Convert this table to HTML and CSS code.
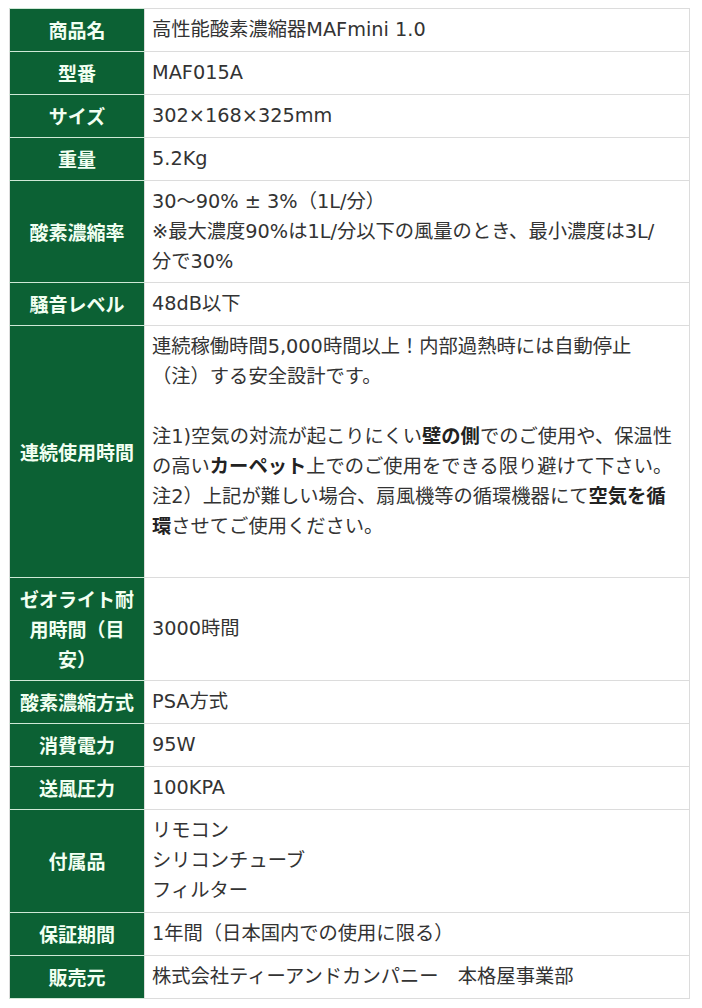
FILE: index.html
```html
<!DOCTYPE html>
<html lang="ja">
<head>
<meta charset="utf-8">
<link rel="stylesheet" href="styles.css">
</head>
<body>
<table class="spec">
<tr><th>商品名</th><td>高性能酸素濃縮器MAFmini 1.0</td></tr>
<tr><th>型番</th><td>MAF015A</td></tr>
<tr><th>サイズ</th><td>302×168×325mm</td></tr>
<tr><th>重量</th><td>5.2Kg</td></tr>
<tr><th>酸素濃縮率</th><td>30〜90% ± 3%（1L/分）<br>※最大濃度90%は1L/分以下の風量のとき、最小濃度は3L/<br>分で30%</td></tr>
<tr><th>騒音レベル</th><td>48dB以下</td></tr>
<tr><th>連続使用時間</th><td>連続稼働時間5,000時間以上！内部過熱時には自動停止<br>（注）する安全設計です。<br><br>注1)空気の対流が起こりにくい<b>壁の側</b>でのご使用や、保温性<br>の高い<b>カーペット</b>上でのご使用をできる限り避けて下さい。<br>注2）上記が難しい場合、扇風機等の循環機器にて<b>空気を循<br>環</b>させてご使用ください。<br><br></td></tr>
<tr><th>ゼオライト耐用時間（目安）</th><td>3000時間</td></tr>
<tr><th>酸素濃縮方式</th><td>PSA方式</td></tr>
<tr><th>消費電力</th><td>95W</td></tr>
<tr><th>送風圧力</th><td>100KPA</td></tr>
<tr><th>付属品</th><td>リモコン<br>シリコンチューブ<br>フィルター</td></tr>
<tr><th>保証期間</th><td>1年間（日本国内での使用に限る）</td></tr>
<tr><th>販売元</th><td>株式会社ティーアンドカンパニー　本格屋事業部</td></tr>
</table>
</body>
</html>
```
FILE: styles.css
```css
html, body {
  margin: 0;
  padding: 0;
  background: #ffffff;
}
body {
  padding: 8px 0 0 9px;
  font-family: "Noto Sans CJK JP", "Noto Sans", sans-serif;
}
.spec {
  border-collapse: collapse;
  width: 681px;
  table-layout: fixed;
  border: 1px solid #dcdcdc;
}
.spec th {
  width: 118px;
  background: #0c6134;
  color: #f2fff2;
  font-weight: bold;
  font-size: 19px;
  line-height: 30px;
  padding: 6px 8px;
  text-align: center;
  vertical-align: middle;
  border: 1px solid #dcdcdc;
  border-left: none;
  border-bottom-color: #cfe8d6;
  border-top-color: #cfe8d6;
}
.spec td {
  color: #333333;
  font-family: "DejaVu Sans", "Noto Sans CJK JP", sans-serif;
  font-size: 19.3px;
  line-height: 30px;
  padding: 5.6px 7px 5.6px;
  vertical-align: middle;
  border: 1px solid #dcdcdc;
}
.spec b {
  font-weight: bold;
  color: #222222;
}
```
